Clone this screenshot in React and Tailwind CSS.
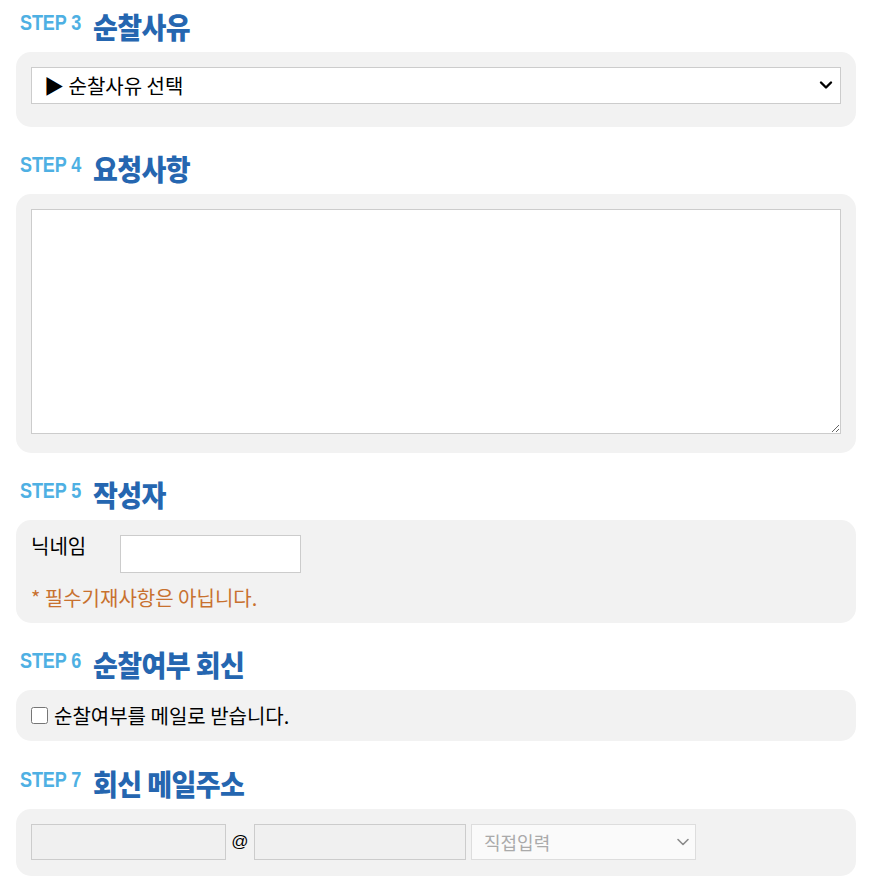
import { useState } from "react";

const font = "font-['Noto_Sans_CJK_KR','Noto_Sans',sans-serif]";

const StepTitle = ({ step, title, first, gap = "mt-[15px]" }) => (
  <div className={`flex items-start h-[52px] pl-[4px] ${first ? "" : gap}`}>
    <span className="mt-[11px] font-['Liberation_Sans',Arial,sans-serif] font-bold text-[18px] leading-none tracking-[-0.1px] text-[#4eb0e3] scale-y-[1.25] origin-top">
      {step}
    </span>
    <span className={`ml-[12px] mt-[12px] ${font} font-black text-[27px] leading-none tracking-[-0.6px] text-[#2566b0] scale-y-[1.08] origin-top`}>
      {title}
    </span>
  </div>
);

const Panel = ({ className = "", children }) => (
  <div className={`bg-[#f2f2f2] rounded-[15px] px-[15px] ${className}`}>{children}</div>
);

const Chevron = ({ color = "#000", width = 2.4 }) => (
  <svg width="14" height="14" viewBox="0 0 14 14" fill="none">
    <path d="M2 4.5 L7 9.5 L12 4.5" stroke={color} strokeWidth={width} strokeLinecap="round" strokeLinejoin="round" />
  </svg>
);

export default function App() {
  const [reason, setReason] = useState("");
  const [memo, setMemo] = useState("");
  const [nick, setNick] = useState("");
  const [mailOk, setMailOk] = useState(false);

  return (
    <div className={`w-[840px] ml-4 bg-white text-black ${font}`}>
      {/* STEP 3 */}
      <StepTitle step="STEP 3" title="순찰사유" first />
      <Panel className="pt-[15px] pb-[23px]">
        <div className="relative">
          <select
            value={reason}
            onChange={(e) => setReason(e.target.value)}
            className="appearance-none w-full h-[37px] border border-[#cccccc] bg-white pl-[12px] text-[20px] text-black outline-none"
          >
            <option value="">▶ 순찰사유 선택</option>
            <option value="1">도난 우려</option>
            <option value="2">빈집 순찰</option>
          </select>
          <span className="pointer-events-none absolute right-[8px] top-[11px]">
            <Chevron />
          </span>
        </div>
      </Panel>

      {/* STEP 4 */}
      <StepTitle step="STEP 4" title="요청사항" />
      <Panel className="pt-[15px] pb-[19px]">
        <textarea
          value={memo}
          onChange={(e) => setMemo(e.target.value)}
          className="block w-full h-[225px] border border-[#cccccc] bg-white outline-none resize-y p-2 text-[16px]"
        />
      </Panel>

      {/* STEP 5 */}
      <StepTitle step="STEP 5" title="작성자" />
      <Panel className="pt-[15px] pb-[12px]">
        <div className="flex items-start">
          <label className="w-[89px] text-[20px] leading-[22px]">닉네임</label>
          <input
            value={nick}
            onChange={(e) => setNick(e.target.value)}
            className="w-[181px] h-[38px] border border-[#cccccc] bg-white outline-none px-2"
          />
        </div>
        <p className="mt-[11px] text-[20px] leading-[27px] text-[#c8712f]">* 필수기재사항은 아닙니다.</p>
      </Panel>

      {/* STEP 6 */}
      <StepTitle step="STEP 6" title="순찰여부 회신" />
      <Panel className="h-[51px] flex items-center">
        <label className="flex items-center gap-[6px] text-[20px]">
          <input
            type="checkbox"
            checked={mailOk}
            onChange={(e) => setMailOk(e.target.checked)}
            className="w-[17px] h-[17px] m-0"
          />
          순찰여부를 메일로 받습니다.
        </label>
      </Panel>

      {/* STEP 7 */}
      <StepTitle step="STEP 7" title="회신 메일주소" gap="mt-[16px]" />
      <Panel className="pt-[15px] pb-[16px]">
        <div className="flex items-center">
          <input
            disabled={!mailOk}
            className="w-[195px] h-[36px] border border-[#cccccc] bg-[#f0f0f0] outline-none px-2"
          />
          <span className="w-[28px] text-center font-['Liberation_Sans',Arial,sans-serif] text-[17px]">@</span>
          <input
            disabled={!mailOk}
            className="w-[212px] h-[36px] border border-[#cccccc] bg-[#f0f0f0] outline-none px-2"
          />
          <div className="relative ml-[5px]">
            <select
              disabled={!mailOk}
              className="appearance-none w-[225px] h-[36px] border border-[#dddddd] bg-[#fafafa] pl-[12px] text-[18px] text-[#aaaaaa] outline-none"
            >
              <option>직접입력</option>
              <option>naver.com</option>
              <option>gmail.com</option>
            </select>
            <span className="pointer-events-none absolute right-[6px] top-[11px]">
              <Chevron color="#8a8a8a" width={1.6} />
            </span>
          </div>
        </div>
      </Panel>
    </div>
  );
}
